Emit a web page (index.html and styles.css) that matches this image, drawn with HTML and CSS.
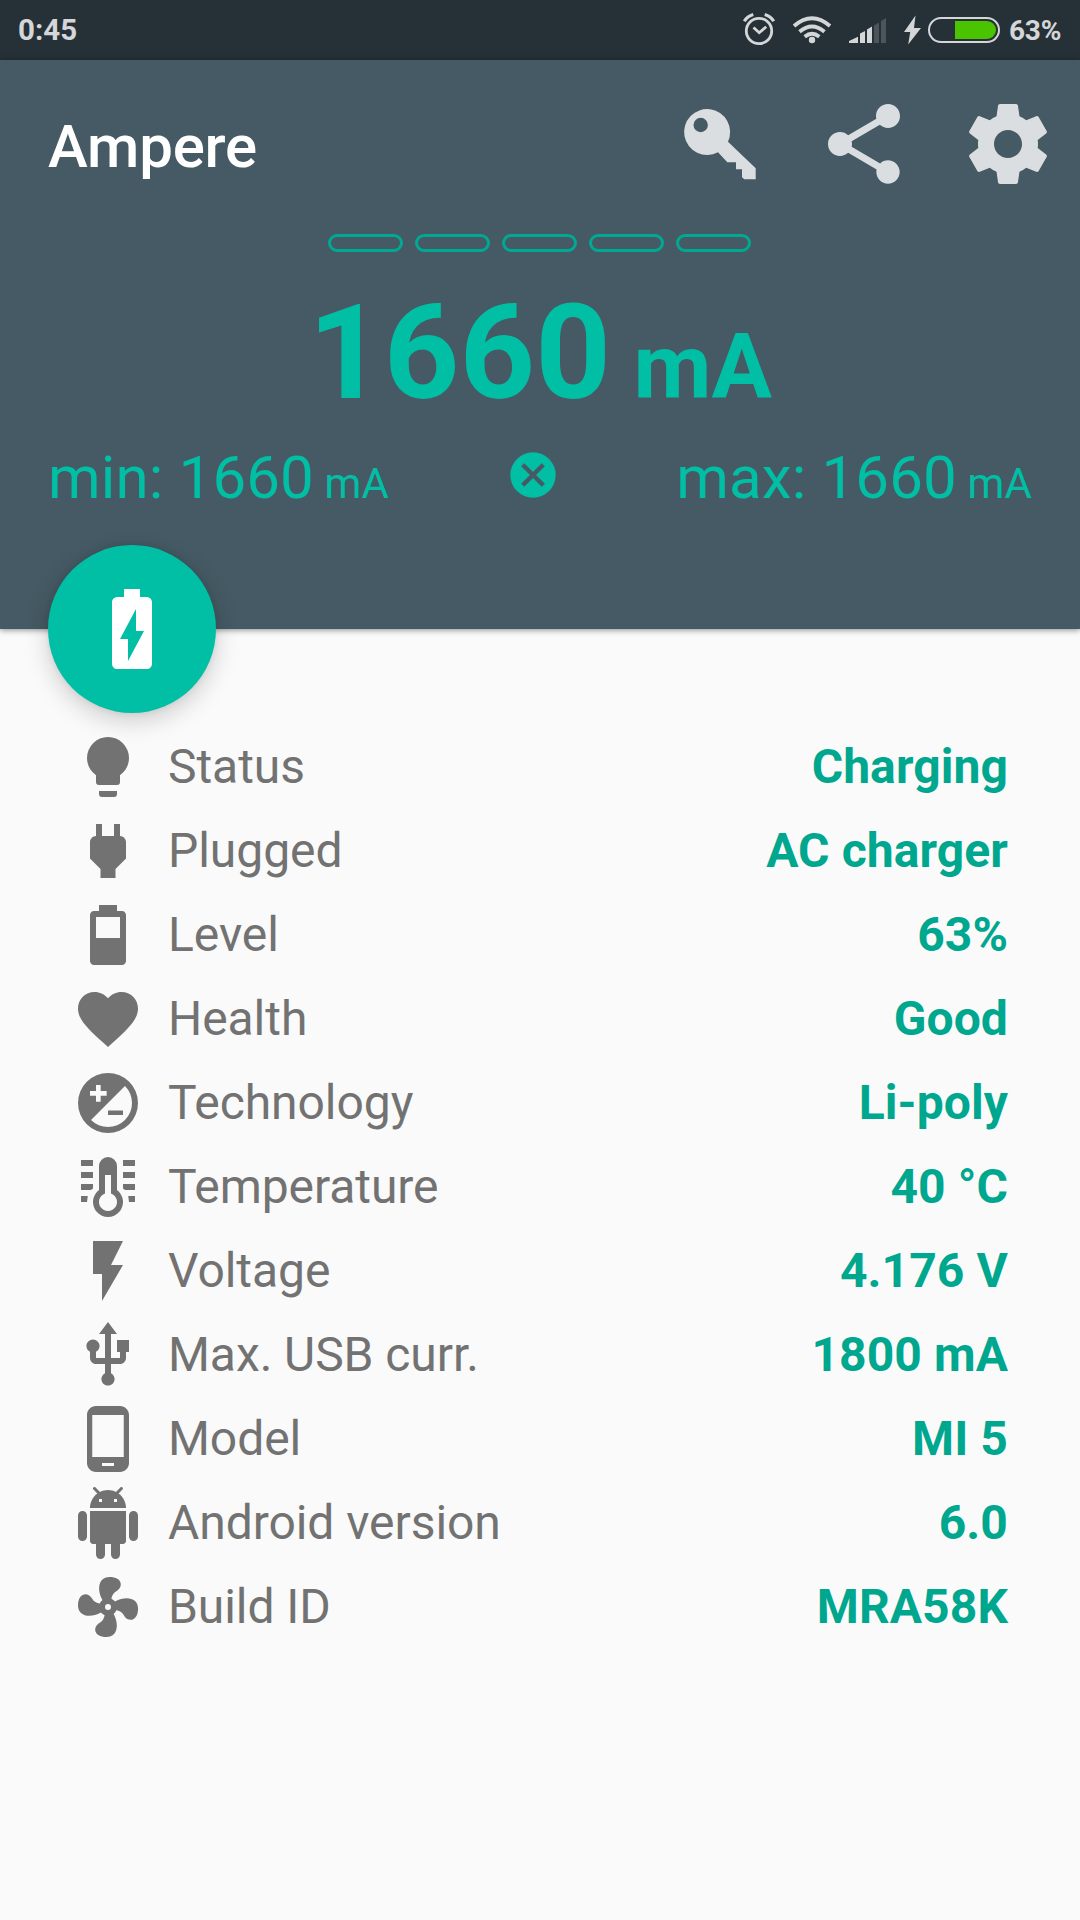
FILE: index.html
```html
<!DOCTYPE html>
<html lang="en">
<head>
<meta charset="utf-8">
<title>Ampere</title>
<link rel="stylesheet" href="styles.css">
</head>
<body>
<div class="status-bar">
  <span class="clock">0:45</span>
  <svg class="status-icons" width="279" height="60" viewBox="0 0 279 60">
    <g fill="none" stroke="#d4d6d7">
      <circle cx="29" cy="31" r="12.7" stroke-width="2.8"/>
      <path d="M23.5 27.5l5.700 5.200 7-6" stroke-width="2.8"/>
      <path d="M14.300 21.200q3-5 9-6.700M43.700 21.200q-3-5-9-6.700" stroke-width="3.200"/>
      <path d="M64 26q18-15.500 36 0M69.500 31.800q12.500-10.500 25 0M74.700 36.700q7.300-6 14.600 0" stroke-width="3.800"/>
      <rect x="199" y="18" width="70" height="24" rx="12" stroke-width="2"/>
    </g>
    <g fill="#d4d6d7">
      <circle cx="82" cy="40" r="3.200"/>
      <path d="M119 43v-2l9-4.200v6.200zM130 43V33.500l5-2.500v12zM137 43V29.500l5-3V43z"/>
      <path d="M185.500 15.500L174 32h6.200L178.200 44.500 191 28h-7z"/>
    </g>
    <path fill="#4b555b" d="M144 43V25.500l5-3V43zM151 43V21l5-3V43z"/>
    <path fill="#4ac300" d="M225 21h32a9 9 0 0 1 0 18h-32z"/>
  </svg>
  <span class="percent">63%</span>
</div>

<header class="header">
  <div class="toolbar">
    <h1 class="title">Ampere</h1>
    <div class="actions">
      <svg class="action" viewBox="0 0 96 96"><path fill-rule="evenodd" d="M56 45.700L83.700 72.300V83.300H72.300L70 81.300V73.300H64V66.300H55.300L46 56.300A23 23 0 1 1 56 45.700zM28.700 21.800a7.200 7.200 0 1 0 0 14.400a7.200 7.200 0 1 0 0-14.400z"/></svg>
      <svg class="action" viewBox="0 0 24 24"><path d="M18 16.080c-.76 0-1.440.3-1.960.77L8.910 12.700c.05-.23.09-.46.09-.7s-.04-.47-.09-.7l7.050-4.110c.54.5 1.250.81 2.040.81 1.660 0 3-1.340 3-3s-1.340-3-3-3-3 1.340-3 3c0 .24.04.47.09.7L8.040 9.810C7.500 9.310 6.790 9 6 9c-1.660 0-3 1.340-3 3s1.340 3 3 3c.79 0 1.500-.31 2.040-.81l7.120 4.160c-.05.21-.08.43-.08.65 0 1.610 1.310 2.920 2.920 2.920 1.610 0 2.920-1.310 2.920-2.920s-1.310-2.920-2.920-2.920z"/></svg>
      <svg class="action" viewBox="0 0 24 24"><path d="M19.430 12.980c.04-.32.07-.64.07-.98s-.03-.66-.07-.98l2.110-1.650c.19-.15.24-.42.12-.64l-2-3.460c-.12-.22-.39-.3-.61-.22l-2.490 1c-.52-.4-1.080-.73-1.690-.98l-.38-2.650C14.460 2.180 14.250 2 14 2h-4c-.25 0-.46.18-.49.42l-.38 2.650c-.61.25-1.170.59-1.690.98l-2.490-1c-.23-.09-.49 0-.61.22l-2 3.460c-.13.22-.07.49.12.64l2.110 1.650c-.04.32-.07.65-.07.98s.03.66.07.98l-2.110 1.650c-.19.15-.24.42-.12.64l2 3.460c.12.22.39.3.61.22l2.490-1c.52.4 1.080.73 1.690.98l.38 2.650c.03.24.24.42.49.42h4c.25 0 .46-.18.49-.42l.38-2.650c.61-.25 1.170-.59 1.690-.98l2.490 1c.23.09.49 0 .61-.22l2-3.460c.12-.22.07-.49-.12-.64l-2.110-1.650zM12 15.500c-1.930 0-3.500-1.570-3.500-3.500s1.570-3.500 3.500-3.500 3.500 1.570 3.500 3.500-1.570 3.500-3.500 3.500z"/></svg>
    </div>
  </div>
  <div class="bars"><i class="bar"></i><i class="bar"></i><i class="bar"></i><i class="bar"></i><i class="bar"></i></div>
  <div class="current">1660<span class="current-unit"> mA</span></div>
  <div class="range">
    <span>min: 1660<span class="range-unit"> mA</span></span>
    <svg class="reset" viewBox="0 0 46 46"><circle cx="23" cy="23" r="22.700" fill="#00bfa5"/><path d="M12.700 12.700l20.600 20.600M33.300 12.700L12.700 33.300" stroke="#455a64" stroke-width="4.400"/></svg>
    <span>max: 1660<span class="range-unit"> mA</span></span>
  </div>
  <div class="fab"><svg class="fab-icon" viewBox="0 0 24 24"><path d="M15.670 4H14V2h-4v2H8.330C7.600 4 7 4.600 7 5.330v15.330C7 21.400 7.600 22 8.330 22h7.330c.74 0 1.340-.6 1.340-1.330V5.330C17 4.600 16.400 4 15.670 4zM11 20v-5.500H9L13 7v5.500h2L11 20z"/></svg></div>
</header>

<main class="list">
  <div class="row"><svg class="icon" viewBox="0 0 24 24"><path d="M12 2A7 7 0 0 0 5 9C5 11.380 6.190 13.470 8 14.740V17A1 1 0 0 0 9 18H15A1 1 0 0 0 16 17V14.740C17.810 13.470 19 11.380 19 9A7 7 0 0 0 12 2M9 21A1 1 0 0 0 10 22H14A1 1 0 0 0 15 21V20H9z"/></svg><span class="label">Status</span><b class="value">Charging</b></div>
  <div class="row"><svg class="icon" viewBox="0 0 24 24"><path d="M16.010 7L16 3h-2v4h-4V3H8v4h-.01C7 6.990 6 7.990 6 8.990v5.490L9.500 18v3h5v-3l3.500-3.510v-5.500c0-1-1-2-1.990-1.990z"/></svg><span class="label">Plugged</span><b class="value">AC charger</b></div>
  <div class="row"><svg class="icon" viewBox="0 0 24 24"><path fill-rule="evenodd" d="M16.670 4H15V2H9v2H7.330C6.600 4 6 4.600 6 5.330v15.340C6 21.400 6.600 22 7.330 22h9.340c.73 0 1.330-.6 1.330-1.330V5.330C18 4.600 17.400 4 16.670 4zM16 13H8V6h8z"/></svg><span class="label">Level</span><b class="value">63%</b></div>
  <div class="row"><svg class="icon" viewBox="0 0 24 24"><path d="M12 21.350l-1.450-1.320C5.400 15.360 2 12.280 2 8.500 2 5.420 4.420 3 7.500 3c1.740 0 3.410.81 4.500 2.090C13.090 3.810 14.760 3 16.500 3 19.580 3 22 5.420 22 8.500c0 3.780-3.400 6.860-8.550 11.540L12 21.350z"/></svg><span class="label">Health</span><b class="value">Good</b></div>
  <div class="row"><svg class="icon" viewBox="0 0 24 24"><path fill-rule="evenodd" d="M12 2a10 10 0 1 0 0 20a10 10 0 1 0 0-20zM17.660 6.340A8 8 0 0 1 6.340 17.660zM8 6h1.550v2h2v1.550h-2v2H8v-2H6V8h2zM12 14.500h5V16h-5z"/></svg><span class="label">Technology</span><b class="value">Li-poly</b></div>
  <div class="row"><svg class="icon" viewBox="0 0 24 24"><path fill-rule="evenodd" d="M9 5a3 3 0 0 1 6 0v8a5 5 0 1 1-6 0zM11 8v6.170a3 3 0 1 0 2 0V8zM3 3h4v2H3zM3 7h4v2H3zM3 11h4v1.500L6.300 13H3zM3 15h2.250L5 17H3zM17 3h4v2h-4zM17 7h4v2h-4zM17 11h4v2h-3.300L17 12.500zM18.750 15H21v2h-2z"/></svg><span class="label">Temperature</span><b class="value">40 °C</b></div>
  <div class="row"><svg class="icon" viewBox="0 0 24 24"><path d="M7 2v11h3v9l7-12h-4l4-8z"/></svg><span class="label">Voltage</span><b class="value">4.176 V</b></div>
  <div class="row"><svg class="icon" viewBox="0 0 24 24"><path d="M15 7v4h1v2h-3V5h2l-3-4-3 4h2v8H8v-2.070c.7-.37 1.200-1.080 1.200-1.930 0-1.210-.99-2.200-2.200-2.200-1.210 0-2.200.99-2.200 2.200 0 .85.5 1.560 1.200 1.930V13c0 1.110.89 2 2 2h3v3.050c-.71.37-1.200 1.100-1.200 1.950 0 1.220.99 2.200 2.200 2.200 1.210 0 2.200-.98 2.200-2.200 0-.85-.49-1.580-1.200-1.950V15h3c1.110 0 2-.89 2-2v-2h1V7h-4z"/></svg><span class="label">Max. USB curr.</span><b class="value">1800 mA</b></div>
  <div class="row"><svg class="icon" viewBox="0 0 24 24"><path d="M16 1H8C6.340 1 5 2.340 5 4v16c0 1.660 1.340 3 3 3h8c1.660 0 3-1.340 3-3V4c0-1.660-1.340-3-3-3zm-2 20h-4v-1h4v1zm3.250-3H6.750V4h10.500v14z"/></svg><span class="label">Model</span><b class="value">MI 5</b></div>
  <div class="row"><svg class="icon" viewBox="0 0 24 24"><path d="M6 18c0 .55.45 1 1 1h1v3.500c0 .83.67 1.500 1.500 1.500s1.500-.67 1.500-1.500V19h2v3.500c0 .83.67 1.500 1.500 1.500s1.500-.67 1.500-1.500V19h1c.55 0 1-.45 1-1V8H6v10zM3.500 8C2.670 8 2 8.670 2 9.500v7c0 .83.67 1.500 1.500 1.500S5 17.330 5 16.500v-7C5 8.670 4.330 8 3.500 8zm17 0c-.83 0-1.500.67-1.500 1.500v7c0 .83.67 1.500 1.500 1.500s1.500-.67 1.500-1.500v-7c0-.83-.67-1.500-1.500-1.500zm-4.970-5.840l1.300-1.300c.2-.2.2-.51 0-.71-.2-.2-.51-.2-.71 0l-1.480 1.480C13.850 1.230 12.950 1 12 1c-.96 0-1.860.23-2.660.63L7.850.15c-.2-.2-.51-.2-.71 0-.2.2-.2.51 0 .71l1.310 1.310C6.970 3.260 6 5.010 6 7h12c0-1.990-.97-3.750-2.470-4.840zM10 5H9V4h1v1zm5 0h-1V4h1v1z"/></svg><span class="label">Android version</span><b class="value">6.0</b></div>
  <div class="row"><svg class="icon" viewBox="0 0 24 24"><path d="M12,11A1,1 0 0,0 11,12A1,1 0 0,0 12,13A1,1 0 0,0 13,12A1,1 0 0,0 12,11M12.500,2C17,2 17.110,5.570 14.750,6.750C13.760,7.240 13.320,8.290 13.130,9.220C13.610,9.420 14.030,9.730 14.350,10.130C18.050,8.130 22.030,8.920 22.030,12.500C22.030,17 18.460,17.100 17.280,14.730C16.780,13.740 15.720,13.300 14.790,13.110C14.590,13.590 14.280,14 13.880,14.340C15.870,18.030 15.080,22 11.500,22C7,22 6.910,18.420 9.270,17.240C10.250,16.750 10.690,15.710 10.890,14.790C10.400,14.590 9.970,14.270 9.650,13.870C5.960,15.850 2,15.070 2,11.500C2,7 5.560,6.890 6.740,9.260C7.240,10.250 8.290,10.680 9.220,10.870C9.410,10.390 9.730,9.970 10.140,9.650C8.150,5.960 8.940,2 12.500,2Z"/></svg><span class="label">Build ID</span><b class="value">MRA58K</b></div>
</main>
</body>
</html>
```
FILE: styles.css
```css
* { box-sizing: border-box; }

body {
  margin: 0;
  height: 1920px;
  background: #fafafa;
  font-family: Roboto, "Noto Sans", sans-serif;
  overflow: hidden;
}

svg { display: block; flex: none; }

.status-bar {
  display: flex;
  align-items: center;
  height: 60px;
  padding: 0 19px 0 18px;
  background: #263137;
  color: #d4d6d7;
  font-size: 29.5px;
  font-weight: 700;
}

.status-icons { margin-left: auto; }
.percent { width: 52px; font-size: 28px; letter-spacing: -.2px; white-space: nowrap; }

.header {
  position: relative;
  height: 569px;
  background: #455a64;
  color: #00bfa5;
  box-shadow: 0 1px 6px rgba(0, 0, 0, .45);
}

.toolbar {
  display: flex;
  align-items: center;
  justify-content: space-between;
  height: 168px;
  padding: 0 24px 0 48px;
}

.title {
  margin: 4px 0 0;
  color: #fff;
  font-size: 60px;
  font-weight: 500;
  letter-spacing: -.2px;
}

.actions { display: flex; gap: 48px; }
.action { width: 96px; height: 96px; fill: #dadee0; }

.bars {
  display: flex;
  gap: 12px;
  margin: 6px 0 0 328px;
}

.bar {
  width: 75px;
  height: 18px;
  border: 3px solid #00a991;
  border-radius: 9px;
}

.current {
  margin-top: 23px;
  height: 156px;
  line-height: 156px;
  text-align: center;
  font-size: 132px;
  font-weight: 700;
  white-space: nowrap;
}

.current-unit { font-size: 90px; }

.range {
  display: flex;
  align-items: center;
  justify-content: space-between;
  height: 72px;
  margin-top: 10px;
  padding: 0 48px;
  font-size: 60px;
  letter-spacing: .15px;
}

.range-unit { font-size: 42px; }
.reset { width: 46px; height: 46px; margin-bottom: 5px; }

/* Overlaps the bottom edge of the header */
.fab {
  position: absolute;
  left: 48px;
  bottom: -84px;
  display: flex;
  align-items: center;
  justify-content: center;
  width: 168px;
  height: 168px;
  border-radius: 50%;
  background: #00bfa5;
  box-shadow: 0 8px 24px rgba(0, 0, 0, .18), 0 0 6px rgba(0, 0, 0, .08);
}

.fab-icon { width: 96px; height: 96px; fill: #fff; }

.list { padding: 96px 72px 0; }

.row {
  display: flex;
  align-items: center;
  height: 84px;
  font-size: 48px;
}

.icon { width: 72px; height: 72px; fill: #727272; }
.label { margin: 0 0 2px 24px; color: #727272; letter-spacing: -.06px; }
.value { margin: 0 0 2px auto; color: #00a78f; font-weight: 700; letter-spacing: .1px; }
```
